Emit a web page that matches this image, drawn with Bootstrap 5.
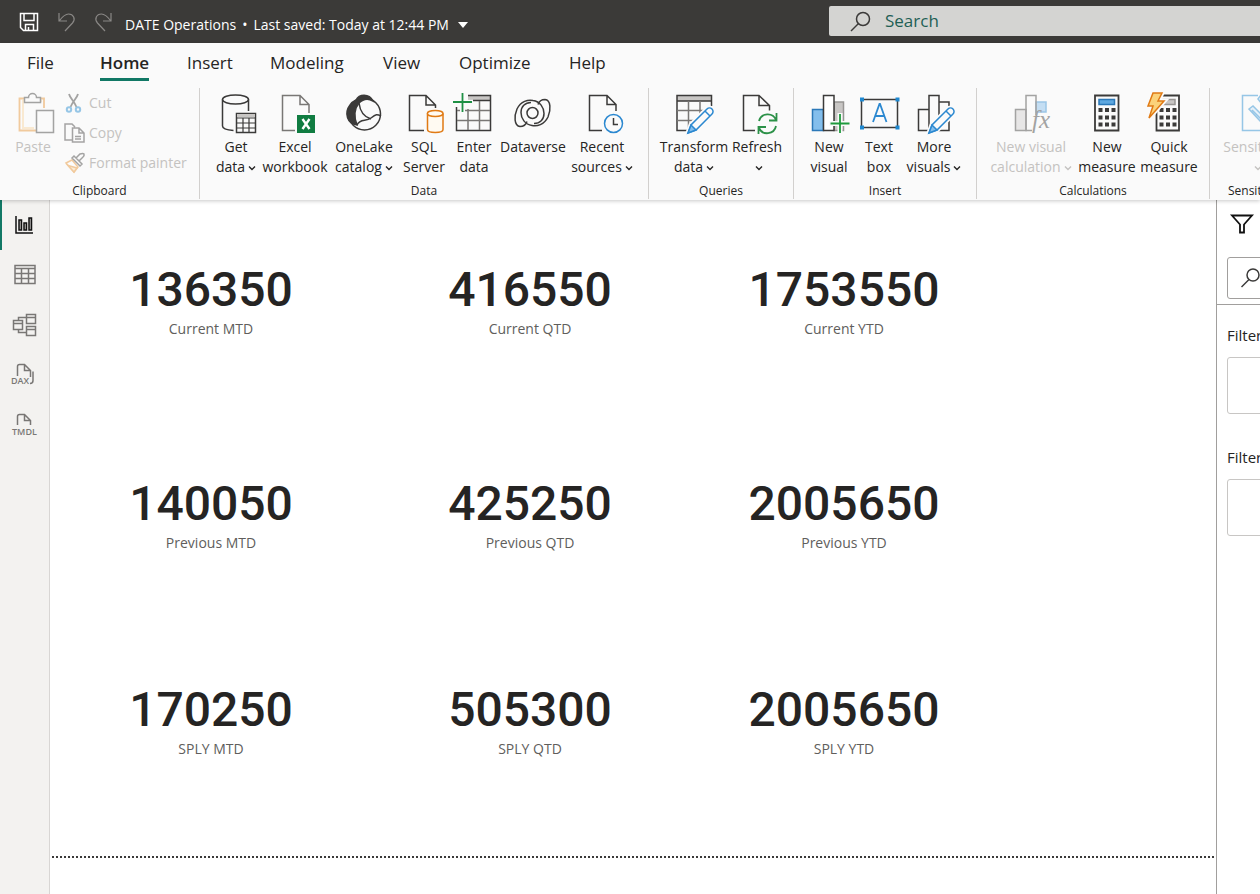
<!DOCTYPE html>
<html lang="en">
<head>
<meta charset="utf-8">
<meta name="viewport" content="width=device-width, initial-scale=1">
<title>DATE Operations</title>
<link href="https://cdn.jsdelivr.net/npm/bootstrap@5.3.0/dist/css/bootstrap.min.css" rel="stylesheet">
<script src="https://cdn.jsdelivr.net/npm/bootstrap@5.3.0/dist/js/bootstrap.bundle.min.js" defer></script>
<style>
  body { font-family: "Open Sans", "Noto Sans", sans-serif; font-size: 14px; line-height: 20px; color: #252423; background: #fff; }
  svg { display: block; overflow: visible; fill: none; stroke: #3b3a39; stroke-width: 1.5; flex: none; }
  button { font: inherit; color: inherit; background: none; border: 0; padding: 0; }
  button:disabled { color: #c4c2c0; }

  .titlebar { height: 43px; background: #3b3a38; color: #fff; }
  .titlebar .doc-title { font-size: 14px; padding-top: 6px; margin-left: 12px; }
  .titlebar .quick { margin-left: 19px; gap: 16px; }
  .dot { margin: 0 6px; }
  .caret-solid { width: 0; height: 0; border: 5px solid transparent; border-top: 6px solid #fff; border-bottom: 0; margin-left: 9px; }
  .find-bar { width: calc(100% - 829px); height: 30px; margin-top: -1px; padding-left: 21px; gap: 14px; background: #d4d4d2; border-radius: 2px 0 0 2px; }
  .find-bar input { font-size: 17px; color: #1f5f55; background: none; border: 0; padding: 0; width: 200px; outline: 0; }
  .find-bar input::placeholder { color: #1f5f55; opacity: 1; }

  .ribbon { background: #fafafa; box-shadow: 0 1px 4px rgba(0, 0, 0, .22); position: relative; z-index: 1; height: 157px; }
  .tabs { height: 45px; padding: 7px 0 0 27px; font-size: 17px; }
  .tabs a { color: #252423; text-decoration: none; line-height: 26px; height: 31px; white-space: nowrap; }
  .tabs a.active { font-weight: 600; border-bottom: 3px solid #117865; }
  .tabs li { flex: none; }
  .tab-s { width: 73px; } .tab-m { width: 83px; } .tab-n { width: 76px; } .tab-home { width: 87px; }
  .tab-l { width: 113px; } .tab-xl { width: 110px; }
  .groups { padding-bottom: 2px; }
  .group { border-right: 1px solid #d2d0ce; padding-top: 5px; flex: none; }
  .group-name { font-size: 12px; line-height: 16px; text-align: center; margin-top: 6px; }
  .tool { display: flex; flex-direction: column; align-items: center; height: 84px; flex: none; white-space: nowrap; }
  .tool svg { width: 40px; height: 40px; margin-bottom: 4px; }
  .tool svg.chev, .chev { width: 8px; height: 6px; display: inline-block; margin: 0 0 1px 3px; stroke-width: 1.4; stroke: currentColor; }
  .lead-in { padding-left: 10px; }
  .w50 { width: 50px; } .w56 { width: 56px; } .w60 { width: 60px; } .w68 { width: 68px; } .w70 { width: 70px; } .w84 { width: 84px; }
  .small-tools { gap: 10px; margin-left: 7px; }
  .small-tools button { display: flex; align-items: center; gap: 5px; height: 20px; white-space: nowrap; }
  .faded { opacity: .45; }

  .rail { width: 50px; background: #f3f2f0; border-right: 1px solid #d8d6d4; flex: none; }
  .rail button { width: 49px; height: 50px; display: flex; align-items: center; padding-left: 12px; }
  .rail button.active { border-left: 2px solid #117865; padding-left: 13px; }
  .rail svg { stroke: #797775; }
  .work { min-height: 694px; }
  .report { border-bottom: 2px dotted #3b3a39; display: grid; grid-template-columns: 318fr 320fr 308fr 216fr; grid-template-rows: 214px 206px 206px; padding-bottom: 30px; margin: 0 2px; }
  .kpi { display: flex; flex-direction: column; align-items: center; padding-top: 61px; }
  .kpi.first { grid-column-start: 1; }
  .kpi-value { font-family: Roboto, "Liberation Sans", sans-serif; font-weight: 500; font-size: 48px; line-height: 58px; }
  .kpi-label { color: #605e5c; }
  .filters { width: 44px; border-left: 1px solid #a19f9d; flex: none; overflow: hidden; white-space: nowrap; }
  .filters-head { height: 105px; border-bottom: 1px solid #a19f9d; padding: 14px 0 0 10px; }
  .filters-body { padding: 20px 0 0 10px; font-size: 15px; }
  .filter-find { width: 240px; height: 42px; border: 1px solid #a19f9d; border-radius: 3px; margin-top: 23px; padding-left: 13px; }
  .filter-find input { border: 0; width: 160px; outline: 0; }
  .filter-box { width: 240px; height: 57px; border: 1px solid #c8c6c4; border-radius: 3px; margin: 12px 0 33px; }
</style>
</head>
<body class="overflow-hidden">

<svg width="0" height="0" class="position-absolute" aria-hidden="true">
  <symbol id="chevron" viewBox="0 0 8 6" overflow="visible"><path d="M1 1.500 4 4.500 7 1.500"/></symbol>
  <symbol id="pencil" viewBox="0 0 28 28" overflow="visible">
    <path d="M1 27 4 19 20 3a3.500 3.500 0 0 1 5 5L9 24Z" fill="#fafafa" stroke="#fafafa" stroke-width="5"/>
    <path d="M1 27 4 19 20 3a3.500 3.500 0 0 1 5 5L9 24Z" fill="#fafafa" stroke="#2b88d0"/>
    <path d="M1 27 4 19 9 24Z" fill="#83beec" stroke="#2b88d0"/><path d="m18 5 5 5" stroke="#2b88d0"/>
  </symbol>
</svg>

<header class="titlebar d-flex align-items-center">
  <div class="quick d-flex align-items-center">
    <button aria-label="Save"><svg width="20" height="20" viewBox="0 0 20 20" style="stroke:#fff"><path d="M1.500 1.500h17v17h-14l-3-3Z M5 1.500v7h10v-7 M6.500 18.500v-6h8v6 M9.500 15v3"/></svg></button>
    <button aria-label="Undo"><svg width="22" height="20" viewBox="0 0 22 20" style="stroke:#8a8886;stroke-width:1.200"><path d="M4 1v8h8 M4.500 8.500C8 4 10 2 13.500 2c5 0 7.500 5 4 9L10 19"/></svg></button>
    <button aria-label="Redo"><svg width="20" height="20" viewBox="0 0 20 20" style="stroke:#8a8886;stroke-width:1.200"><path d="M18 1v8h-8 M17.500 8.500C14 4 12 2 8.500 2c-5 0-7.500 5-4 9L12 19"/></svg></button>
  </div>
  <button class="doc-title d-flex align-items-center text-nowrap">DATE Operations<span class="dot">•</span>Last saved: Today at 12:44 PM<span class="caret-solid"></span></button>
  <label class="find-bar d-flex align-items-center ms-auto">
    <svg width="21" height="21" viewBox="0 0 21 21"><circle cx="13" cy="8" r="6.500"/><path d="m8.500 12.500-7.500 7.500"/></svg>
    <input type="text" placeholder="Search" aria-label="Search">
  </label>
</header>

<section class="ribbon">
  <nav aria-label="Ribbon tabs">
    <ul class="tabs d-flex list-unstyled m-0">
      <li class="tab-s"><a class="d-inline-block" href="#">File</a></li>
      <li class="tab-home"><a class="d-inline-block active" href="#">Home</a></li>
      <li class="tab-m"><a class="d-inline-block" href="#">Insert</a></li>
      <li class="tab-l"><a class="d-inline-block" href="#">Modeling</a></li>
      <li class="tab-n"><a class="d-inline-block" href="#">View</a></li>
      <li class="tab-xl"><a class="d-inline-block" href="#">Optimize</a></li>
      <li><a class="d-inline-block" href="#">Help</a></li>
    </ul>
  </nav>

  <div class="groups d-flex overflow-hidden">
    <div class="group" style="width:200px">
      <div class="d-flex">
        <button class="tool w50 ms-2" disabled>
          <svg viewBox="-3 0 40 40" class="faded"><path d="M28 15V5.500H3.500v32H20" stroke="#e8912d" stroke-width="1.800"/><path d="M26 8H7v27h11" stroke="#f8d6a0" stroke-width="2"/><path d="M8.500 9.500v-5h4a4 4 0 0 1 8 0h4v5Z" fill="#fafafa"/><path d="M20.500 17.500h17v22h-17Z" fill="#fafafa"/></svg>Paste</button>
        <div class="small-tools d-flex flex-column">
          <button disabled><svg class="faded" width="19" height="20" viewBox="0 0 19 20"><path d="M4 1c1 4 5 7 7.500 13M13 1c-1 4-5 7-7.500 13" stroke-width="1.800"/><circle cx="4" cy="16.500" r="2.200" stroke="#1e88d0" stroke-width="2"/><circle cx="13" cy="16.500" r="2.200" stroke="#1e88d0" stroke-width="2"/></svg>Cut</button>
          <button disabled><svg class="faded" width="19" height="20" viewBox="0 0 19 20"><path d="M7 17H0V1h7l3 3M7.500 5H14l5 5v9H7.500ZM14 5v5h5M10 13.500h6M10 16h6"/></svg>Copy</button>
          <button disabled><svg class="faded" width="19" height="20" viewBox="0 0 19 20"><path d="M1 10 7 7l6 7-4 5Z" fill="#fff" stroke="#e8912d"/><path d="m3 12.500 9 2.500-3 4Z" fill="#fbdcae" stroke="#e8912d"/><path d="m7 5 2-2 8 8-2 2ZM11 5l4-4q3-1 4 0 .500 2-1 3l-4 4"/></svg>Format painter</button>
        </div>
      </div>
      <div class="group-name">Clipboard</div>
    </div>

    <div class="group" style="width:449px">
      <div class="d-flex justify-content-center">
        <button class="tool w50">
          <svg viewBox="0 0 40 40"><ellipse cx="19.500" cy="6.500" rx="13" ry="4.500"/><path d="M6.500 6.500V33c0 2.500 4 4 11 4.500M32.500 6.500V18"/><path d="M20.500 20.500h19v19h-19Z" fill="#fafafa"/><path d="M21 21h18v3H21Z" fill="#c8c6c4" stroke="none"/><path d="M20.500 25h19M20.500 30h19M20.500 35h19M27 25v14M33 25v14" stroke-width="1.200"/></svg>
          Get<span>data<svg class="chev"><use href="#chevron"/></svg></span></button>
        <button class="tool w68">
          <svg viewBox="0 0 40 40"><path d="M20 37.500H7.500v-35H25l9 9V20M25 2.500v9h9" stroke="#797775"/><path d="M22 22h18v18H22Z" fill="#107c41" stroke="none"/><path d="m27.500 26 7 10M34.500 26l-7 10" stroke="#fff" stroke-width="2.400"/></svg>
          Excel<span>workbook</span></button>
        <button class="tool w70">
          <svg viewBox="0 0 40 40"><path d="M12 7C15 1 25 0 29 8 24 5 19 6 15 10c-5 6-5 14-2 22C3 31 0 20 6 12c2-3 4-4 6-5Z" fill="#3b3a39"/><circle cx="20.500" cy="21" r="16"/><path d="M15 10c1 8 5 14 12 16M13 32c3-7 9-3 14-7s6-4 10-2"/></svg>
          OneLake<span>catalog<svg class="chev"><use href="#chevron"/></svg></span></button>
        <button class="tool w50">
          <svg viewBox="0 0 40 40"><path d="M20 37.500H5.500v-35H22l9.500 9.500v3M22 2.500v9.500h9.500"/><path d="M23.500 20.500v16c0 4 15.500 4 15.500 0v-16" fill="#fffaf2" stroke="#e07a14"/><ellipse cx="31.200" cy="20.500" rx="7.800" ry="3" fill="#fffaf2" stroke="#e07a14"/></svg>
          SQL<span>Server</span></button>
        <button class="tool w50">
          <svg viewBox="0 0 40 40"><path d="M14 3h22v4H14Z" fill="#c8c6c4" stroke="none"/><path d="M14 2.500h22.500v35H2.500V14M14 7.500h22"/><path d="M3 17.500h33M3 27.500h33M14 16v21M25.500 8v29" stroke="#797775"/><path d="M8.500-1v20M-1 9h20" stroke="#fafafa" stroke-width="5"/><path d="M8.500 0v19M-1 9h19" stroke="#1e9044" stroke-width="1.800"/></svg>
          Enter<span>data</span></button>
        <button class="tool w68">
          <svg viewBox="0 0 40 40"><path id="swirl" d="M14 28.500c-1 3-4 5-7 5C1 33 1 23 4 16 8 8 15 6.500 20 7.500c7 1 11 7 11 13 0 6-4 10-10 10"/><use href="#swirl" transform="rotate(180 19.500 20)"/><circle cx="19.500" cy="20" r="5.500"/></svg>
          Dataverse</button>
        <button class="tool w70">
          <svg viewBox="0 0 40 40"><path d="M20 37.500H7.500v-35H25l9 9V18M25 2.500v9h9"/><circle cx="31.500" cy="30.500" r="9" fill="#fafafa" stroke="#2b88d0"/><path d="M31.500 25v6.500H36"/></svg>
          Recent<span>sources<svg class="chev"><use href="#chevron"/></svg></span></button>
      </div>
      <div class="group-name">Data</div>
    </div>

    <div class="group" style="width:145px">
      <div class="lead-in d-flex">
        <button class="tool w70">
          <svg viewBox="0 0 40 40"><path d="M3 3h34v5H3Z" fill="#c8c6c4" stroke="none"/><path d="M15 37.500H3v-35h34.500V13M3 8h34"/><path d="M3 17.500h29M3 27.500h18M14.500 8v29M26 8v15" stroke="#797775"/><use href="#pencil" x="13" y="13" width="28" height="28"/></svg>
          Transform<span>data<svg class="chev"><use href="#chevron"/></svg></span></button>
        <button class="tool w56">
          <svg viewBox="0 0 40 40"><path d="M18 37.500H6.500v-35H22l10.500 10v5M22 2.500v10h10.500"/><path d="M22 28a9 9 0 0 1 17-1M39.500 20v7.500H32M39 33a9 9 0 0 1-17 2M21.500 41v-7H29" stroke="#2c9148" stroke-width="1.800"/></svg>
          Refresh<span><svg class="chev"><use href="#chevron"/></svg></span></button>
      </div>
      <div class="group-name">Queries</div>
    </div>

    <div class="group" style="width:183px">
      <div class="lead-in d-flex">
        <button class="tool w50">
          <svg viewBox="0 0 40 40"><path d="M3.500 16.500h11v21h-11Z" fill="#83beec" stroke="#2b78b8"/><path d="M25 9h9.500v28.500H25Z" fill="#c8c6c4" stroke="#979593"/><path d="M14.500 2.500H25v35H14.500Z" fill="#fff"/><path d="M31 20v21M20 30.500h21" stroke="#fafafa" stroke-width="5"/><path d="M31 21v19M21.500 30.500h19" stroke="#1e9a3c" stroke-width="1.800"/></svg>
          New<span>visual</span></button>
        <button class="tool w50">
          <svg viewBox="0 0 40 40"><path d="M2.500 6.500h36v28h-36Z"/><path d="M1 4.500h4v4H1ZM36.500 4.500h4v4h-4ZM1 32.500h4v4H1ZM36.500 32.500h4v4h-4Z" fill="#1e88d0" stroke="none"/><path d="m14 29 6.500-18h.500L27.500 29M16.300 23h9" stroke="#2b88d0" stroke-width="1.800"/></svg>
          Text<span>box</span></button>
        <button class="tool w60">
          <svg viewBox="0 0 40 40"><path d="M15 37.500H4.500v-21H15M25 9h10v28.500H25M15 2.500h10v35H15Z"/><use href="#pencil" x="14" y="13" width="28" height="28"/></svg>
          More<span>visuals<svg class="chev"><use href="#chevron"/></svg></span></button>
      </div>
      <div class="group-name">Insert</div>
    </div>

    <div class="group" style="width:233px">
      <div class="d-flex justify-content-center">
        <button class="tool w84" disabled>
          <svg viewBox="0 0 40 40" class="faded"><path d="M4.500 16.500H15v21H4.500Z" fill="#d2d0ce"/><path d="M25 9h10v10H25Z" fill="#83beec" stroke="#2b88d0"/><path d="M25 22V2.500H15v35h6"/><text x="21" y="35" font-family="Liberation Serif" font-style="italic" font-size="25" fill="#3b3a39" stroke="none">fx</text></svg>
          New visual<span>calculation<svg class="chev"><use href="#chevron"/></svg></span></button>
        <button class="tool w68">
          <svg viewBox="0 0 40 40"><path d="M8 2.500h23.500v35H8Z" stroke-width="1.800"/><path d="M12 6.500h15.500v5H12Z" fill="#5ea8e0" stroke="#2b78b8"/><path d="M11.500 17h17M11.500 24.500h17M11.500 31.500h17" stroke-width="4" stroke-dasharray="4 2.500"/></svg>
          New<span>measure</span></button>
        <button class="tool w56">
          <svg viewBox="0 0 40 40"><path d="M7.500 2.500h22.500v35H7.500Z" stroke-width="1.800"/><path d="M14 6.500h12v5H14Z" fill="#c8c6c4" stroke="#979593"/><path d="M10.500 17h17M10.500 24.500h17M10.500 31.500h17" stroke-width="4" stroke-dasharray="4 2.500"/><path d="M4 0h9l-4 8h6L0 25l4-12h-5Z" fill="#fbd27a" stroke="#fafafa" stroke-width="5"/><path d="M4 0h9l-4 8h6L0 25l4-12h-5Z" fill="#fbd27a" stroke="#e07a14"/></svg>
          Quick<span>measure</span></button>
      </div>
      <div class="group-name">Calculations</div>
    </div>

    <div class="group border-0" style="width:92px">
      <div class="d-flex justify-content-center">
        <button class="tool w70" disabled>
          <svg viewBox="0 0 40 40" class="faded"><path d="M22 2.500H6.500v35h30V22" stroke="#1e88d0"/><path d="m13 16 4-3 14 14-4 4Z M16 17l10 10M22 6l3-4 5 5-4 4Z" fill="#cfe6f7" stroke="#1e88d0"/></svg>
          Sensitivity<span><svg class="chev"><use href="#chevron"/></svg></span></button>
      </div>
      <div class="group-name">Sensitivity</div>
    </div>
  </div>
</section>

<div class="work d-flex">
  <nav class="rail" aria-label="Views">
    <button class="active" aria-label="Report view"><svg width="18" height="18" viewBox="0 0 18 18" style="stroke:#111"><path d="M4 4h2.500v10H4ZM9 7h2.500v7H9ZM14 2h2.500v12H14Z" fill="#b8b6b4"/><path d="M1 0v17h17"/></svg></button>
    <button aria-label="Table view"><svg class="ms-1" width="20" height="20" viewBox="0 0 20 20"><path d="M-1 .500h20v18H-1ZM-1 3.500h20M-1 8.500h20M-1 13.500h20M5.500 3.500v15M12.500 3.500v15"/></svg></button>
    <button aria-label="Model view"><svg width="24" height="24" viewBox="0 0 24 24"><path d="M1.500 7.500h9v9h-9ZM1.500 10.500h9M14.500 1.500h9v9h-9ZM14.500 4.500h9M14.500 13.500h9v9h-9ZM14.500 16.500h9M6.500 7V4.500h8M6.500 17v2.500h8"/></svg></button>
    <button aria-label="DAX query view"><svg width="24" height="24" viewBox="0 0 24 24"><path d="M5.500 13V3.500q0-2 2-2h5l6 6V14M12.500 1.500v6h6M21 8.500v9q0 3-3 3"/><text x="-1" y="21" font-size="9" font-weight="600" fill="#797775" stroke="none">DAX</text></svg></button>
    <button aria-label="TMDL view"><svg width="24" height="24" viewBox="0 0 24 24"><path d="M5.500 12V3.500q0-2 2-2h5l6 6V12M12.500 1.500v6h6"/><text x="0" y="22" font-size="9" font-weight="600" fill="#797775" stroke="none">TMDL</text></svg></button>
  </nav>

  <main class="flex-grow-1">
    <div class="report">
      <div class="kpi first"><div class="kpi-value">136350</div><div class="kpi-label">Current MTD</div></div>
      <div class="kpi"><div class="kpi-value">416550</div><div class="kpi-label">Current QTD</div></div>
      <div class="kpi"><div class="kpi-value">1753550</div><div class="kpi-label">Current YTD</div></div>
      <div class="kpi first"><div class="kpi-value">140050</div><div class="kpi-label">Previous MTD</div></div>
      <div class="kpi"><div class="kpi-value">425250</div><div class="kpi-label">Previous QTD</div></div>
      <div class="kpi"><div class="kpi-value">2005650</div><div class="kpi-label">Previous YTD</div></div>
      <div class="kpi first"><div class="kpi-value">170250</div><div class="kpi-label">SPLY MTD</div></div>
      <div class="kpi"><div class="kpi-value">505300</div><div class="kpi-label">SPLY QTD</div></div>
      <div class="kpi"><div class="kpi-value">2005650</div><div class="kpi-label">SPLY YTD</div></div>
    </div>
  </main>

  <aside class="filters" aria-label="Filters">
    <div class="filters-head">
      <svg class="ms-1" width="22" height="20" viewBox="0 0 22 20" style="stroke:#111;stroke-width:1.800"><path d="M1 1.500h20l-8 9V18.500H9v-8Z"/></svg>
      <label class="filter-find d-flex align-items-center"><svg width="20" height="20" viewBox="0 0 20 20"><circle cx="12" cy="7" r="6"/><path d="M8 11.500.500 19"/></svg><input type="text" aria-label="Search filters"></label>
    </div>
    <div class="filters-body">
      <div>Filters on this page</div>
      <div class="filter-box"></div>
      <div>Filters on all pages</div>
      <div class="filter-box"></div>
    </div>
  </aside>
</div>
</body>
</html>
